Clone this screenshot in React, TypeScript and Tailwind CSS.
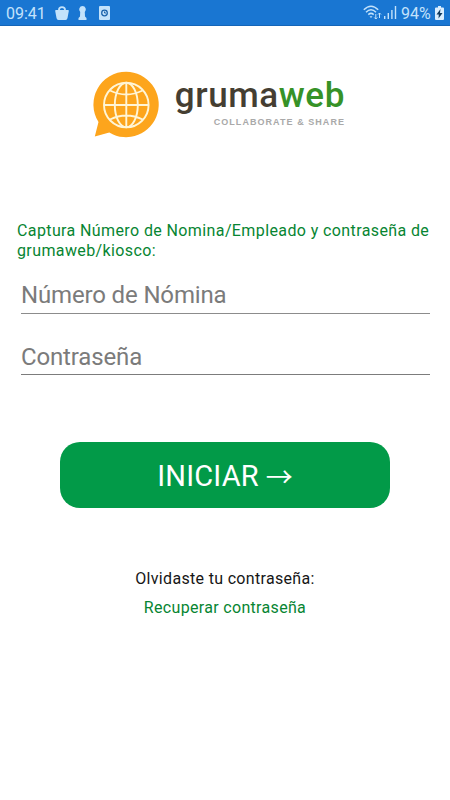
import { useState } from "react";

export default function App() {
  const [employee, setEmployee] = useState("");
  const [password, setPassword] = useState("");

  return (
    <div className="flex h-[800px] w-[450px] flex-col overflow-hidden bg-white font-['Roboto',sans-serif]">
      <StatusBar />
      <main className="flex flex-1 flex-col">
        <Logo />

        <form className="mt-[82px] flex flex-col" onSubmit={(e) => e.preventDefault()}>
          <p className="pl-[17px] text-[16px] leading-5 tracking-[0.390px] whitespace-nowrap text-[#078532]">
            Captura Número de Nomina/Empleado y contraseña de
            <br />
            grumaweb/kiosco:
          </p>
          <div className="mr-5 ml-[21px] flex flex-col">
            <input
              value={employee}
              onChange={(e) => setEmployee(e.target.value)}
              placeholder="Número de Nómina"
              className="mt-4 h-[37px] border-b border-[#8c8c8c] text-2xl tracking-[-0.150px] text-black outline-none placeholder:text-[#7b7b7b]"
            />
            <input
              type="password"
              value={password}
              onChange={(e) => setPassword(e.target.value)}
              placeholder="Contraseña"
              className="mt-[25px] h-9 border-b border-[#7c7c7c] text-2xl tracking-[-0.150px] text-black outline-none placeholder:text-[#7b7b7b]"
            />
          </div>
          <button className="mx-[60px] mt-[67px] flex h-[66px] items-center justify-center rounded-[20px] bg-[#029a48] text-[29px] text-white">
            <span className="pt-[3px] tracking-[0.200px]">INICIAR</span>
            <span className="ml-[7px] font-['Noto_Sans_CJK_JP',sans-serif] text-[27px] leading-none">→</span>
          </button>
        </form>

        <div className="mt-[61px] flex flex-col items-center text-[16px] leading-5 tracking-[0.320px]">
          <p className="text-[#161616]">Olvidaste tu contraseña:</p>
          <a href="#" className="mt-[9px] text-[#078532]">
            Recuperar contraseña
          </a>
        </div>
      </main>
    </div>
  );
}

function StatusBar() {
  return (
    <header className="flex h-[26px] shrink-0 items-center border-b border-[#1465b8] bg-[#1976d2] pl-[6px] text-[16px] leading-none text-[#c3e2fb]">
      <span className="w-[41px] pt-[2px] whitespace-nowrap">09:41</span>
      <svg className="ml-2 h-[14px] w-[14px]" viewBox="0 0 14 14">
        <path d="M1 4h12q1 0 .8 1l-1.3 7q-.3 2-2 2h-7q-1.700 0-2-2L.2 5Q0 4 1 4z" fill="currentColor" />
        <path d="M4 5V3.800a3 2.600 0 0 1 6 0V5" fill="none" stroke="currentColor" strokeWidth="1.800" />
      </svg>
      <svg className="ml-[9px] h-[14px] w-[9px]" viewBox="0 0 9 14">
        <path d="M4.500 0a3.500 3.500 0 0 1 2.300 6L7 10.500l1.500 1.500v2H.5v-2L2 10.500 2.200 6A3.500 3.500 0 0 1 4.500 0z" fill="currentColor" />
      </svg>
      <svg className="ml-3 h-[14px] w-[11px]" viewBox="0 0 11 14">
        <rect width="11" height="14" rx="1" fill="currentColor" />
        <circle cx="5.500" cy="7" r="2.800" fill="none" stroke="#1b62ab" strokeWidth="1.300" />
        <path d="M5.500 5.500V7H7" fill="none" stroke="#1b62ab" />
      </svg>

      <svg className="ml-auto h-[15px] w-[19px]" viewBox="0 0 19 15" fill="none" stroke="currentColor" strokeWidth="1.500">
        <path d="M.8 4.800Q8-2.500 15.200 4.800M3 7.300Q8 2.300 13 7.300M5.300 9.600Q8 7.200 10.700 9.600" />
        <path d="M6.500 11.200h3L8 13z" fill="currentColor" stroke="none" />
        <path d="M12.800 9v5M11.300 12.500l1.500 1.500 1.500-1.500M16.500 13V8M15 9.500L16.500 8 18 9.500" strokeWidth="1" />
      </svg>
      <svg className="ml-[2px] h-[13px] w-[13px]" viewBox="0 0 13 13" fill="currentColor">
        <path d="M0 10h1.400v3H0zM3.600 7H5v6H3.600zM7.200 4h1.400v9H7.200zM10.800 0h1.400v13h-1.400z" />
      </svg>
      <span className="ml-1 w-[30px] pt-[2px]">94%</span>
      <svg className="mr-[6px] ml-[4px] h-[14px] w-[9px]" viewBox="0 0 9 14">
        <path d="M3 0h3v1.500h2q1 0 1 1V13q0 1-1 1H1q-1 0-1-1V2.500q0-1 1-1h2z" fill="#d9edff" />
        <path d="M5.500 3L1.500 8.500h2.300L3.500 12.500 7.500 7H5z" fill="#123a5e" />
      </svg>
    </header>
  );
}

function Logo() {
  return (
    <div className="mt-[45px] ml-[93px] flex h-[68px]">
      <svg className="h-[68px] w-[68px]" viewBox="0 0 68 68">
        <path d="M33.300 .8a32.700 32.700 0 1 1-17 60.800L1.800 65.500 5.500 51A32.700 32.700 0 0 1 33.300 .8z" fill="#fda51c" />
        <g fill="none" stroke="#fff5d6" strokeWidth="1.900">
          <circle cx="33.300" cy="34" r="22.300" />
          <ellipse cx="33.300" cy="34" rx="11.500" ry="22.300" />
          <path d="M33.300 11.700v44.600M11 34h44.600M17 19.500q16.300 8 32.600 0M17 48.500q16.300-8 32.600 0" />
        </g>
      </svg>
      <div className="ml-[13px] flex w-[171px] flex-col items-end">
        <div className="mt-[5px] text-[35px] leading-10 font-medium tracking-[0.600px] whitespace-nowrap text-[#453e32]">
          gruma<span className="text-[#369227]">web</span>
        </div>
        <div className="font-['Liberation_Sans',sans-serif] text-[9px] leading-3 font-bold tracking-[1.050px] whitespace-nowrap text-[#a9a9a9]">
          COLLABORATE &amp; SHARE
        </div>
      </div>
    </div>
  );
}
